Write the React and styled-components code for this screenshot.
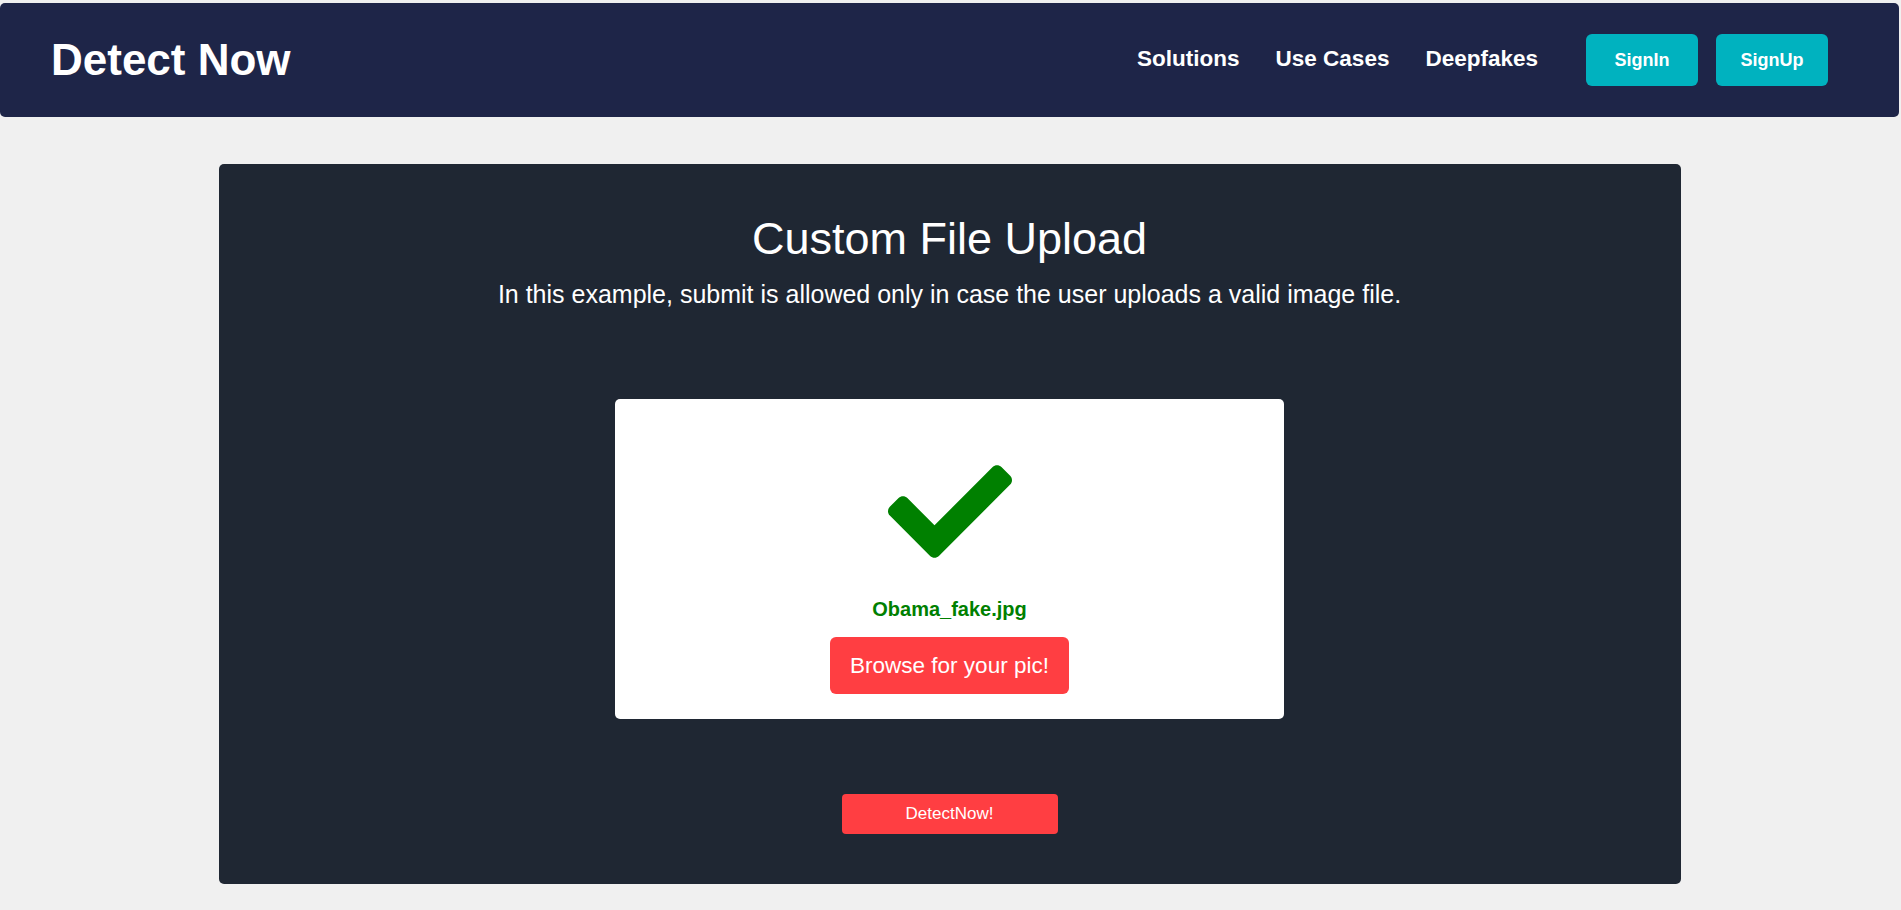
import { createGlobalStyle, styled } from "styled-components"

const GlobalStyle = createGlobalStyle`
  html, body {
    margin: 0;
    padding: 0;
    background: #f0f0f0;
    font-family: "Liberation Sans", Arial, sans-serif;
  }
`

const Header = styled.header`
  display: flex;
  align-items: center;
  justify-content: space-between;
  height: 114px;
  margin: 3px 2px 0 0;
  padding: 0 71px 0 51px;
  background: #1e2548;
  border-radius: 5px;
`
const Logo = styled.h1`
  margin: 0;
  color: #fff;
  font-size: 44px;
  font-weight: 700;
`
const Nav = styled.nav`
  display: flex;
  align-items: center;
`
const NavLink = styled.a`
  color: #fff;
  font-size: 22.5px;
  font-weight: 700;
  margin-right: 36px;
  margin-top: -2px;
  text-decoration: none;
  &:last-of-type {
    margin-right: 48px;
  }
`
const NavButton = styled.button`
  width: 112px;
  height: 52px;
  margin-left: ${(p) => (p.$first ? "0" : "18px")};
  border: none;
  border-radius: 6px;
  background: #00b2bf;
  color: #fff;
  font-family: inherit;
  font-size: 18px;
  font-weight: 700;
`

const Main = styled.main`
  display: flex;
  justify-content: center;
  padding: 47px 2px 26px 0;
`
const Card = styled.section`
  width: 1462px;
  box-sizing: border-box;
  display: flex;
  flex-direction: column;
  align-items: center;
  padding: 50px 0 50px;
  background: #1f2733;
  border-radius: 5px;
  color: #fff;
`
const Title = styled.h2`
  margin: 0;
  font-size: 45px;
  font-weight: 400;
  line-height: 50px;
`
const Subtitle = styled.p`
  margin: 16px 0 0;
  font-size: 25px;
  line-height: 28px;
`
const UploadBox = styled.div`
  width: 669px;
  height: 320px;
  box-sizing: border-box;
  margin-top: 91px;
  padding-top: 65px;
  display: flex;
  flex-direction: column;
  align-items: center;
  background: #fff;
  border-radius: 5px;
`
const FileName = styled.div`
  margin-top: 39px;
  color: #008000;
  font-size: 20px;
  font-weight: 700;
  line-height: 23px;
`
const RedButton = styled.button`
  border: none;
  background: #ff3e42;
  color: #fff;
  font-family: inherit;
  ${(p) =>
    p.$big
      ? `
    margin-top: 16px;
    height: 57px;
    padding: 0 20px;
    border-radius: 6px;
    font-size: 22.5px;
  `
      : `
    margin-top: 75px;
    width: 216px;
    height: 40px;
    border-radius: 4px;
    font-size: 17px;
  `}
`

const Check = () => (
  <svg width="124" height="95" viewBox="0 60 512 392" fill="#008000">
    <path d="M173.898 439.404l-166.4-166.4c-9.997-9.997-9.997-26.206 0-36.204l36.203-36.204c9.997-9.998 26.207-9.998 36.204 0L192 312.69 432.095 72.596c9.997-9.997 26.207-9.997 36.204 0l36.203 36.204c9.997 9.997 9.997 26.206 0 36.204l-294.4 294.401c-9.998 9.997-26.207 9.997-36.204-.001z" />
  </svg>
)

const App = () => {
  return (
    <>
      <GlobalStyle />
      <Header>
        <Logo>Detect Now</Logo>
        <Nav>
          <NavLink>Solutions</NavLink>
          <NavLink>Use Cases</NavLink>
          <NavLink>Deepfakes</NavLink>
          <NavButton $first>SignIn</NavButton>
          <NavButton>SignUp</NavButton>
        </Nav>
      </Header>
      <Main>
        <Card>
          <Title>Custom File Upload</Title>
          <Subtitle>
            In this example, submit is allowed only in case the user uploads a valid image file.
          </Subtitle>
          <UploadBox>
            <Check />
            <FileName>Obama_fake.jpg</FileName>
            <RedButton $big>Browse for your pic!</RedButton>
          </UploadBox>
          <RedButton>DetectNow!</RedButton>
        </Card>
      </Main>
    </>
  )
}

export default App
